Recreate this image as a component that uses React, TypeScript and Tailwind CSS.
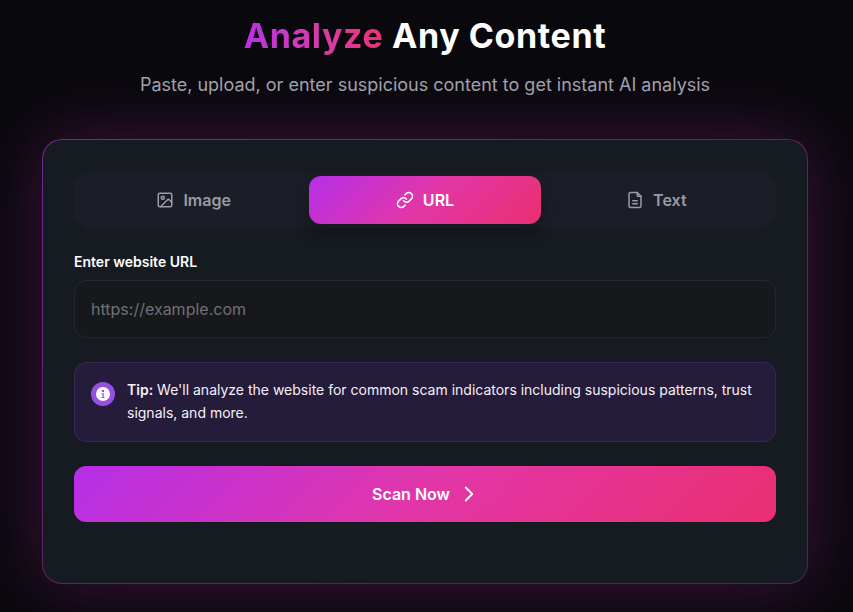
import { ChevronRight, Image, Link } from "lucide-react";

function TextIcon() {
    return (
        <svg viewBox="0 0 24 24" className="w-[18px] h-[18px]" fill="none" stroke="currentColor" strokeWidth="2" strokeLinecap="round" strokeLinejoin="round">
            <path d="M15 2H6a2 2 0 0 0-2 2v16a2 2 0 0 0 2 2h12a2 2 0 0 0 2-2V7z"></path>
            <path d="M15 2v4a1 1 0 0 0 1 1h4"></path>
            <path d="M9 13h6"></path>
            <path d="M9 17h6"></path>
        </svg>
    );
}

function InfoDot() {
    return (
        <svg viewBox="0 0 16 16" className="w-[14px] h-[14px]">
            <circle cx="8" cy="8" r="8" fill="#ffffff"></circle>
            <circle cx="8" cy="4.6" r="1.4" fill="#9650dd"></circle>
            <path d="M6.4 7h2.4v4.4h1v1.2H6.4v-1.2h1V8.2h-1z" fill="#9650dd"></path>
        </svg>
    );
}

export default function App() {
    const tabs = [
        { label: "Image", icon: <Image className="w-[18px] h-[18px]" strokeWidth={2} />, active: false },
        { label: "URL", icon: <Link className="w-[18px] h-[18px]" strokeWidth={2} />, active: true },
        { label: "Text", icon: <TextIcon />, active: false },
    ];

    return (
        <div className="w-full h-[612px] overflow-hidden bg-[#09090d] font-['Inter',sans-serif] text-white">
            <div className="w-[850px]">
                <div className="pt-[14px] text-center">
                    <h1 className="text-[34px] leading-[44px] tracking-[0.6px] font-bold">
                        <span className="bg-gradient-to-r from-[#b92fe6] to-[#ee2f74] bg-clip-text text-transparent">Analyze</span> Any Content
                    </h1>
                    <p className="mt-[13px] text-[18px] leading-[28px] text-[#a1a1aa]">
                        Paste, upload, or enter suspicious content to get instant AI analysis
                    </p>
                </div>

                {/* Card */}
                <div className="mx-[42px] mt-[40px] h-[445px] rounded-[20px] p-px bg-gradient-to-br from-[#6f2a9a] via-[#5a2560] to-[#4a2a50] shadow-[0_0_70px_rgba(190,40,170,0.3)]">
                    <div className="h-full rounded-[19px] bg-[#161a21] px-[31px] pt-[32px]">
                        <div className="flex h-[56px] rounded-2xl bg-[#1b1e26] p-1">
                            {tabs.map((tab) => (
                                <div
                                    key={tab.label}
                                    className={
                                        tab.active
                                            ? "flex-1 flex items-center justify-center gap-[9px] rounded-xl text-[16px] font-semibold text-white bg-[linear-gradient(135deg,#b52fe8,#e236a8,#ea2f70)] shadow-[0_8px_16px_rgba(0,0,0,0.25)]"
                                            : "flex-1 flex items-center justify-center gap-[9px] rounded-xl text-[16px] font-semibold text-[#9a9ca4]"
                                    }
                                >
                                    {tab.icon}
                                    {tab.label}
                                </div>
                            ))}
                        </div>

                        <label className="block mt-[24px] text-[14px] leading-[20px] font-semibold text-white">Enter website URL</label>
                        <div className="mt-2 flex h-[58px] items-center rounded-xl border border-[#26282e] bg-[#17181c] px-4 text-[16px] text-[#6f7075]">
                            https://example.com
                        </div>

                        <div className="mt-[24px] flex h-[80px] gap-3 rounded-xl border border-[#3a2558] bg-[#251b3b] px-4 pt-[15px]">
                            <div className="mt-[4px] flex h-6 w-6 shrink-0 items-center justify-center rounded-full bg-[#9650dd]">
                                <InfoDot />
                            </div>
                            <p className="text-[14px] leading-[23px] text-[#f3f1f7]">
                                <span className="font-semibold">Tip:</span> We'll analyze the website for common scam indicators including suspicious patterns, trust signals, and more.
                            </p>
                        </div>

                        <div className="mt-[24px] flex h-[56px] items-center justify-center rounded-xl bg-[linear-gradient(135deg,#b52fe8,#e236a8,#ea2f70)] text-[16px] font-semibold text-white">
                            Scan Now
                            <ChevronRight className="ml-[6px] -mr-[4px] h-[26px] w-[26px]" strokeWidth={1.7} />
                        </div>
                    </div>
                </div>
            </div>
        </div>
    );
}
